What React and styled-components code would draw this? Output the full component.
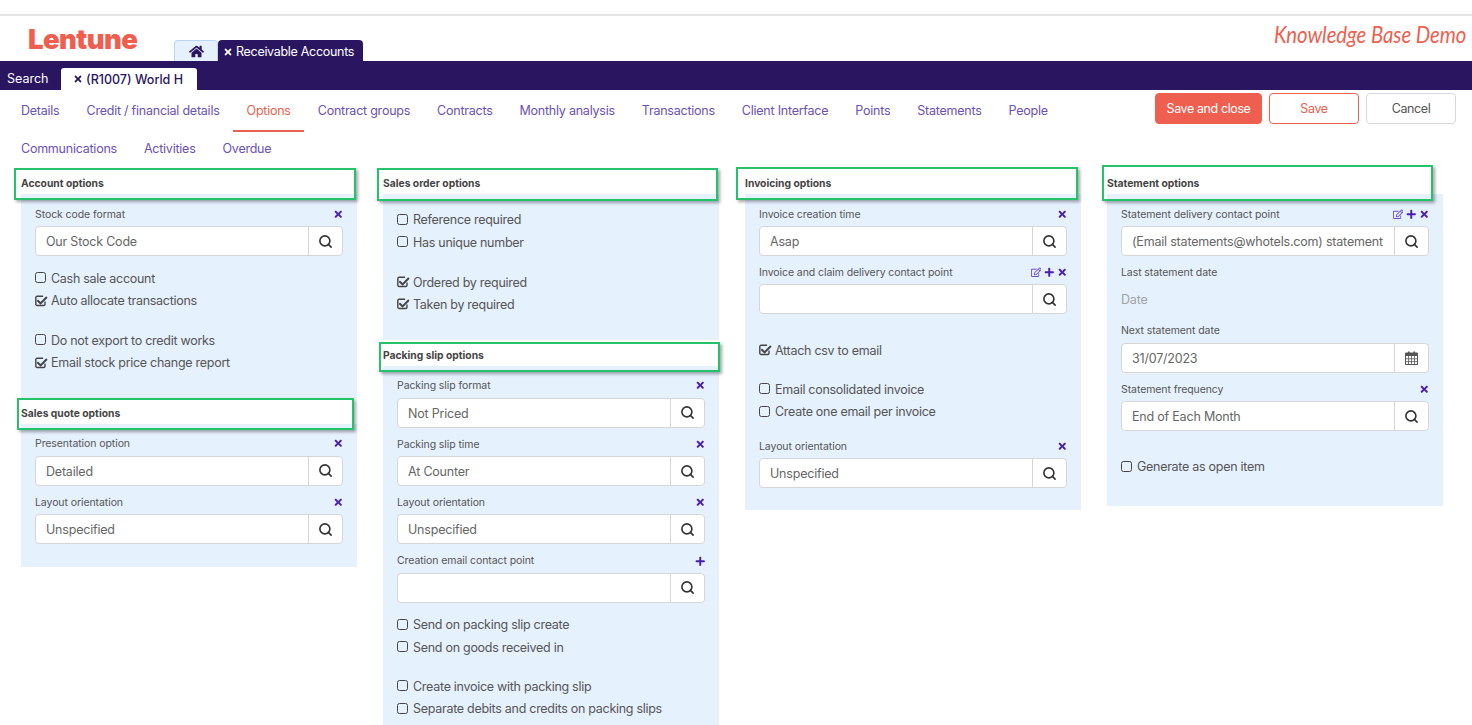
import React from 'react'
import styled, { createGlobalStyle } from 'styled-components'
import { FaHome, FaTimes, FaPlus, FaRegEdit } from 'react-icons/fa'
import { Search } from 'lucide-react'

const purple = '#2a1560'
const violet = '#4a1fae'
const coral = '#ee5f50'
const panelBlue = '#e6f1fe'

const GlobalStyle = createGlobalStyle`
  html, body { margin: 0; padding: 0; background: #fff; }
  body { font-family: Inter, "Noto Sans", sans-serif; color: #555; }
  * { box-sizing: border-box; }
`

const Page = styled.div`
  width: 1472px;
  height: 725px;
  overflow: hidden;
`

const TopStrip = styled.div`
  height: 16px;
  border-bottom: 2px solid #e4e4e4;
`

const Header = styled.header`
  height: 45px;
  display: flex;
  align-items: flex-end;
  padding: 0 6px 0 28px;
`

const Logo = styled.div`
  width: 146px;
  align-self: flex-start;
  margin-top: 5px;
  font-size: 27.5px;
  line-height: 36px;
  font-weight: 900;
  letter-spacing: -0.6px;
  color: ${coral};
`

const HomeTab = styled.div`
  width: 44px;
  height: 21px;
  display: flex;
  align-items: center;
  justify-content: center;
  background: ${panelBlue};
  border: 1px solid #b9d6f5;
  border-bottom: none;
  border-radius: 4px 4px 0 0;
  color: ${purple};
  font-size: 15px;
`

const AppTab = styled.div`
  height: 21px;
  display: flex;
  align-items: center;
  gap: 3px;
  padding: 2px 9px 0 5px;
  background: ${purple};
  border-radius: 4px 4px 0 0;
  color: #fff;
  font-size: 12.5px;
  letter-spacing: -0.3px;
  white-space: nowrap;
`

const DemoTitle = styled.div`
  margin-left: auto;
  align-self: flex-start;
  margin-top: 2px;
  font-family: Lato, sans-serif;
  font-style: italic;
  font-size: 24px;
  line-height: 32px;
  letter-spacing: -0.1px;
  color: ${coral};
  transform: scaleX(0.85);
  transform-origin: right center;
`

const RecordBar = styled.div`
  height: 29px;
  display: flex;
  align-items: flex-end;
  background: ${purple};
  padding-left: 7px;
`

const SearchLink = styled.div`
  width: 54px;
  height: 22px;
  line-height: 22px;
  color: #fff;
  font-size: 12.5px;
`

const RecordTab = styled.div`
  width: 136px;
  height: 22px;
  display: flex;
  align-items: center;
  justify-content: center;
  gap: 3px;
  padding-right: 2px;
  background: #fff;
  border-radius: 3px 3px 0 0;
  color: ${purple};
  font-size: 12.5px;
  font-weight: 500;
`

const ToolRow = styled.div`
  height: 78px;
  display: flex;
  justify-content: space-between;
  padding-right: 16px;
`

const Tabs = styled.nav`
  width: 1100px;
  padding: 2px 0 0 7.5px;
  display: flex;
  flex-wrap: wrap;
  align-content: flex-start;
`

const Tab = styled.a`
  position: relative;
  height: 38px;
  line-height: 38px;
  padding: 0 13.5px;
  font-size: 12.5px;
  letter-spacing: -0.235px;
  color: ${p => (p.$active ? coral : '#6a51b8')};

  &::after {
    content: '';
    display: ${p => (p.$active ? 'block' : 'none')};
    position: absolute;
    left: 0;
    right: 0;
    bottom: -2px;
    height: 2px;
    background: ${coral};
  }
`

const Actions = styled.div`
  display: flex;
  gap: 7px;
  padding-top: 3px;
`

const ActionButton = styled.button`
  width: ${p => p.$width}px;
  height: 31px;
  padding: 0;
  border-radius: 4px;
  font: inherit;
  font-size: 12.5px;
  letter-spacing: -0.4px;
  white-space: nowrap;
  border: 1px solid ${p => (p.$kind === 'cancel' ? '#d9d9d9' : coral)};
  background: ${p => (p.$kind === 'primary' ? coral : '#fff')};
  color: ${p => (p.$kind === 'primary' ? '#fff' : p.$kind === 'cancel' ? '#555' : coral)};
`

const Columns = styled.main`
  display: grid;
  grid-template-columns: repeat(4, 336px);
  column-gap: 26px;
  padding-left: 21px;
  align-items: start;
`

const Heading = styled.h3`
  position: relative;
  height: 26px;
  margin: 0;
  padding-top: 9px;
  font-size: 10.3px;
  line-height: 13px;
  font-weight: 700;
  color: #444;
  background: #fff;
`

const Callout = styled.span`
  position: absolute;
  top: ${p => p.$top}px;
  bottom: ${p => p.$bottom}px;
  left: ${p => p.$left}px;
  right: ${p => p.$right}px;
  border: 2px solid #22c36b;
  box-shadow: 2px 2px 3px rgba(0, 0, 0, 0.35);
  z-index: 2;
`

const Body = styled.div`
  background: ${panelBlue};
  padding: ${p => p.$top ?? 11}px 14px ${p => p.$bottom}px;
`

const Field = styled.div`
  margin-bottom: 7.4px;
`

const LabelRow = styled.div`
  height: 18px;
  margin-bottom: 3px;
  display: flex;
  align-items: center;
  justify-content: space-between;
  font-size: 10.5px;
  letter-spacing: -0.08px;
  color: #555;
`

const FieldTools = styled.span`
  display: flex;
  gap: 2.5px;
  color: ${violet};
  font-size: 10.5px;
`

const EditTool = styled.span`
  display: flex;
  color: #6f4fd0;
`

const InputGroup = styled.div`
  height: 30px;
  display: flex;
  background: #fff;
  border: 1px solid #d6d6d6;
  border-radius: 4px;
`

const InputText = styled.div`
  flex: 1;
  min-width: 0;
  margin: 0 11px 0 10px;
  font-size: 12.5px;
  letter-spacing: -0.2px;
  line-height: 29px;
  color: #666;
  white-space: nowrap;
  overflow: hidden;
`

const InputButton = styled.div`
  width: 34px;
  flex: none;
  display: flex;
  align-items: center;
  justify-content: center;
  border-left: 1px solid #d6d6d6;
  color: #333;
`

const PlainValue = styled.div`
  height: 30px;
  line-height: 32px;
  font-size: 12.5px;
  letter-spacing: -0.2px;
  color: #a3a3a3;
`

const CheckGroup = styled.div`
  margin-top: ${p => p.$top}px;
`

const CheckRow = styled.label`
  height: 22.4px;
  display: flex;
  align-items: center;
  gap: 5px;
  font-size: 12.5px;
  letter-spacing: -0.28px;
  color: #555;
`

const Box = styled.span`
  width: 11px;
  height: 11px;
  margin-bottom: 1px;
  border: 1.4px solid #444;
  border-radius: 2.5px;
  flex: none;
`

const TickSvg = styled.svg`
  width: 13px;
  height: 13px;
  margin-right: -2px;
  margin-bottom: 1px;
  flex: none;
`

function Check({ label, on }) {
  return (
    <CheckRow>
      {on ? (
        <TickSvg viewBox="0 0 13 13">
          <path d="M10 7.4v2.8a1.3 1.3 0 0 1-1.3 1.3H2.1a1.3 1.3 0 0 1-1.3-1.3V3.6a1.3 1.3 0 0 1 1.3-1.3h6" fill="none" stroke="#444" strokeWidth="1.4" />
          <path d="M3 5.6 5.6 8.1 11.2 2.3 12.6 3.7 5.6 10.8 1.6 7z" fill="#444" />
        </TickSvg>
      ) : (
        <Box />
      )}
      {label}
    </CheckRow>
  )
}

function CalendarIcon() {
  return (
    <svg width="13" height="14" viewBox="0 0 13 14">
      <path d="M3 .5h1.6V3H3zM8.4.5H10V3H8.4z" fill="#555" />
      <path d="M.5 2h12v11.5H.5z" fill="none" stroke="#555" />
      <path d="M.5 2h12v3H.5z" fill="#555" />
      <path d="M3.5 5v8.5M6.5 5v8.5M9.5 5v8.5M.5 7.8h12M.5 10.6h12" stroke="#555" strokeWidth="0.8" />
    </svg>
  )
}

function LookupField({ label, value, tools = [], calendar }) {
  return (
    <Field>
      <LabelRow>
        {label}
        <FieldTools>
          {tools.includes('edit') && <EditTool><FaRegEdit /></EditTool>}
          {tools.includes('add') && <FaPlus />}
          {tools.includes('clear') && <FaTimes />}
        </FieldTools>
      </LabelRow>
      <InputGroup>
        <InputText>{value}</InputText>
        <InputButton>{calendar ? <CalendarIcon /> : <Search size={15} strokeWidth={2.6} />}</InputButton>
      </InputGroup>
    </Field>
  )
}

const tabs = [
  'Details', 'Credit / financial details', 'Options', 'Contract groups', 'Contracts', 'Monthly analysis',
  'Transactions', 'Client Interface', 'Points', 'Statements', 'People', 'Communications', 'Activities', 'Overdue',
]

export default function App() {
  return (
    <Page>
      <GlobalStyle />
      <TopStrip />
      <Header>
        <Logo>Lentune</Logo>
        <HomeTab><FaHome /></HomeTab>
        <AppTab><FaTimes size={10} />Receivable Accounts</AppTab>
        <DemoTitle>Knowledge Base Demo</DemoTitle>
      </Header>
      <RecordBar>
        <SearchLink>Search</SearchLink>
        <RecordTab><FaTimes size={10} />(R1007) World H</RecordTab>
      </RecordBar>
      <ToolRow>
        <Tabs>
          {tabs.map(t => <Tab key={t} $active={t === 'Options'}>{t}</Tab>)}
        </Tabs>
        <Actions>
          <ActionButton $kind="primary" $width={107}>Save and close</ActionButton>
          <ActionButton $kind="save" $width={90}>Save</ActionButton>
          <ActionButton $kind="cancel" $width={90}>Cancel</ActionButton>
        </Actions>
      </ToolRow>
      <Columns>
        <section>
          <Heading>Account options<Callout $top={0} $bottom={-6} $left={-7} $right={1} /></Heading>
          <Body $bottom={23.7}>
            <LookupField label="Stock code format" value="Our Stock Code" tools={['clear']} />
            <CheckGroup $top={11.3}>
              <Check label="Cash sale account" />
              <Check label="Auto allocate transactions" on />
            </CheckGroup>
            <CheckGroup $top={17.2}>
              <Check label="Do not export to credit works" />
              <Check label="Email stock price change report" on />
            </CheckGroup>
          </Body>
          <Heading>Sales quote options<Callout $top={0} $bottom={-6} $left={-4} $right={3} /></Heading>
          <Body $bottom={15.2}>
            <LookupField label="Presentation option" value="Detailed" tools={['clear']} />
            <LookupField label="Layout orientation" value="Unspecified" tools={['clear']} />
          </Body>
        </section>

        <section>
          <Heading>Sales order options<Callout $top={0} $bottom={-7} $left={-6} $right={1} /></Heading>
          <Body $top={14.5} $bottom={24}>
            <CheckGroup $top={0}>
              <Check label="Reference required" />
              <Check label="Has unique number" />
            </CheckGroup>
            <CheckGroup $top={17.6}>
              <Check label="Ordered by required" on />
              <Check label="Taken by required" on />
            </CheckGroup>
          </Body>
          <Heading>Packing slip options<Callout $top={2} $bottom={-6} $left={-4} $right={-1} /></Heading>
          <Body $bottom={24}>
            <LookupField label="Packing slip format" value="Not Priced" tools={['clear']} />
            <LookupField label="Packing slip time" value="At Counter" tools={['clear']} />
            <LookupField label="Layout orientation" value="Unspecified" tools={['clear']} />
            <LookupField label="Creation email contact point" value="" tools={['add']} />
            <CheckGroup $top={10.8}>
              <Check label="Send on packing slip create" />
              <Check label="Send on goods received in" />
            </CheckGroup>
            <CheckGroup $top={16.6}>
              <Check label="Create invoice with packing slip" />
              <Check label="Separate debits and credits on packing slips" />
            </CheckGroup>
          </Body>
        </section>

        <section>
          <Heading>Invoicing options<Callout $top={-1} $bottom={-6} $left={-9} $right={3} /></Heading>
          <Body $bottom={14.5}>
            <LookupField label="Invoice creation time" value="Asap" tools={['clear']} />
            <LookupField label="Invoice and claim delivery contact point" value="" tools={['edit', 'add', 'clear']} />
            <CheckGroup $top={24.6}>
              <Check label="Attach csv to email" on />
            </CheckGroup>
            <CheckGroup $top={16.6}>
              <Check label="Email consolidated invoice" />
              <Check label="Create one email per invoice" />
            </CheckGroup>
            <CheckGroup $top={14.5}>
              <LookupField label="Layout orientation" value="Unspecified" tools={['clear']} />
            </CheckGroup>
          </Body>
        </section>

        <section>
          <Heading>Statement options<Callout $top={-3} $bottom={-7} $left={-5} $right={10} /></Heading>
          <Body $bottom={28}>
            <LookupField label="Statement delivery contact point" value="(Email statements@whotels.com) statement" tools={['edit', 'add', 'clear']} />
            <Field>
              <LabelRow>Last statement date</LabelRow>
              <PlainValue>Date</PlainValue>
            </Field>
            <LookupField label="Next statement date" value="31/07/2023" calendar />
            <LookupField label="Statement frequency" value="End of Each Month" tools={['clear']} />
            <CheckGroup $top={24.6}>
              <Check label="Generate as open item" />
            </CheckGroup>
          </Body>
        </section>
      </Columns>
    </Page>
  )
}
